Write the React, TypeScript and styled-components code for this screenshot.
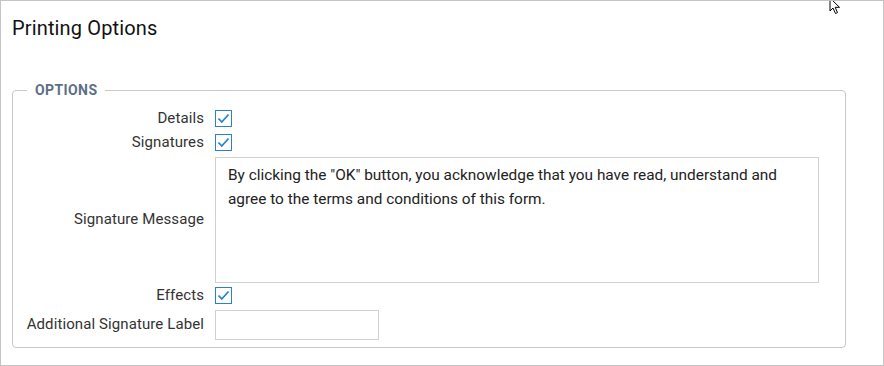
import React from 'react';
import styled, { createGlobalStyle } from 'styled-components';

const GlobalStyle = createGlobalStyle`
  html, body {
    margin: 0;
    padding: 0;
    background: #ffffff;
  }
  body {
    font-family: Roboto, 'Liberation Sans', sans-serif;
    color: #333333;
  }
`;

const Window = styled.div`
  position: relative;
  box-sizing: border-box;
  width: 884px;
  height: 366px;
  border: 1px solid #c4c4c4;
  padding: 0 37px 0 11px;
  overflow: hidden;
`;

const Title = styled.h1`
  margin: 0;
  padding-top: 15px;
  font-size: 20px;
  line-height: 24px;
  font-weight: 400;
  color: #111111;
  letter-spacing: 0.15px;
`;

const Fieldset = styled.fieldset`
  margin: 42px 0 0 0;
  padding: 8px 0 7px 0;
  border: 1px solid #c8c8c8;
  border-radius: 4px;
  min-width: 0;
`;

const Legend = styled.legend`
  margin-left: 14px;
  padding: 0 8px;
  font-size: 14px;
  line-height: 16px;
  font-weight: 700;
  color: #5d6f86;
  letter-spacing: 0.4px;
`;

const Form = styled.div`
  display: grid;
  grid-template-columns: 191px 1fr;
  column-gap: 11px;
  align-items: center;
`;

const Label = styled.label`
  text-align: right;
  font-size: 15px;
  line-height: 24px;
  color: #333333;
  white-space: nowrap;
  letter-spacing: 0.1px;
`;

const Cell = styled.div`
  display: flex;
  align-items: center;
  min-height: 24px;
`;

const Box = styled.span`
  box-sizing: border-box;
  width: 17px;
  height: 17px;
  border: 1px solid #2a82cf;
  display: inline-flex;
  align-items: center;
  justify-content: center;
  background: #ffffff;
`;

const TextArea = styled.textarea`
  box-sizing: border-box;
  width: 604px;
  height: 126px;
  margin-top: 3px;
  padding: 5px 18px 5px 12px;
  border: 1px solid #d2d2d2;
  border-radius: 0;
  resize: none;
  overflow: hidden;
  font-family: Roboto, 'Liberation Sans', sans-serif;
  font-size: 15.4px;
  line-height: 24px;
  color: #222222;
  outline: none;
`;

const Input = styled.input`
  box-sizing: border-box;
  width: 164px;
  height: 30px;
  margin-top: 3px;
  border: 1px solid #d2d2d2;
  padding: 0 8px;
  font-family: Roboto, 'Liberation Sans', sans-serif;
  font-size: 15px;
  outline: none;
`;

const Pointer = styled.svg`
  position: absolute;
  left: 828px;
  top: -4px;
`;

const Check = () => (
  <Box>
    <svg width="13" height="11" viewBox="0 0 13 11">
      <path d="M1.5 5.5 L4.8 9 L11.5 1.5" fill="none" stroke="#2a82cf" strokeWidth="1.8" />
    </svg>
  </Box>
);

const message =
  'By clicking the "OK" button, you acknowledge that you have read, understand and agree to the terms and conditions of this form.';

const App = (): JSX.Element => {
  return (
    <>
      <GlobalStyle />
      <Window>
        <Title>Printing Options</Title>
        <Fieldset>
          <Legend>OPTIONS</Legend>
          <Form>
            <Label>Details</Label>
            <Cell>
              <Check />
            </Cell>
            <Label>Signatures</Label>
            <Cell>
              <Check />
            </Cell>
            <Label>Signature Message</Label>
            <Cell>
              <TextArea defaultValue={message} />
            </Cell>
            <Label>Effects</Label>
            <Cell>
              <Check />
            </Cell>
            <Label>Additional Signature Label</Label>
            <Cell>
              <Input />
            </Cell>
          </Form>
        </Fieldset>
        <Pointer width="14" height="18" viewBox="0 0 14 18">
          <path d="M1 1 L1 14 L4 11 L6.5 16.5 L8.5 15.6 L6.2 10.3 L10.5 10.3 Z" fill="#ffffff" stroke="#000000" strokeWidth="1" />
        </Pointer>
      </Window>
    </>
  );
};

export default App;
